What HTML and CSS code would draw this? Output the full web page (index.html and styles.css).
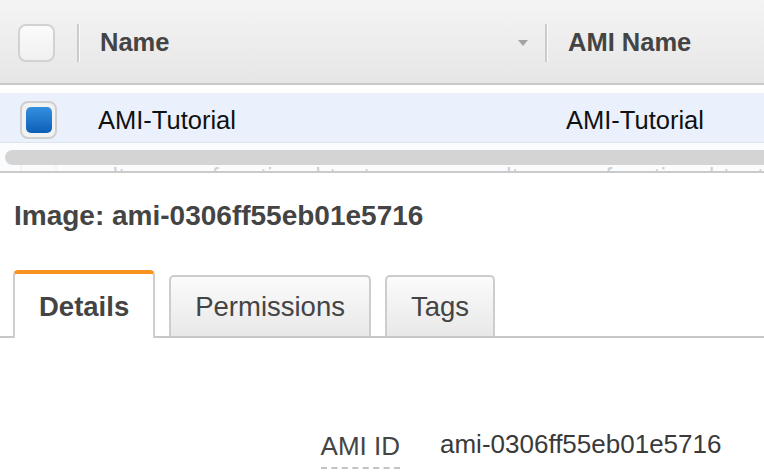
FILE: index.html
```html
<!DOCTYPE html>
<html lang="en">
<head>
<meta charset="utf-8">
<title>AMI Details</title>
<link rel="stylesheet" href="styles.css">
</head>
<body>
<div class="table">
  <div class="thead">
    <div class="cell c-check"><span class="checkbox"></span></div>
    <div class="cell c-name"><span>Name</span><span class="sort"></span></div>
    <div class="cell c-ami"><span>AMI Name</span></div>
  </div>
  <div class="row selected">
    <div class="rc rc-check"><span class="checkbox checked"><span class="tick"></span></span></div>
    <div class="rc rc-name">AMI-Tutorial</div>
    <div class="rc rc-ami">AMI-Tutorial</div>
  </div>
  <div class="row next">
    <div class="rc rc-check"><span class="checkbox faded"></span></div>
    <div class="rc rc-name">salt-server functional-test</div>
    <div class="rc rc-ami">salt-server functional-test</div>
  </div>
  <div class="track"><div class="thumb"></div></div>
</div>

<h2 class="title">Image: ami-0306ff55eb01e5716</h2>

<div class="tabs">
  <div class="tab active">Details</div>
  <div class="tab">Permissions</div>
  <div class="tab">Tags</div>
</div>

<div class="details">
  <div class="label"><span>AMI ID</span></div>
  <div class="value">ami-0306ff55eb01e5716</div>
</div>
</body>
</html>
```

FILE: styles.css
```css
html, body {
  margin: 0;
  padding: 0;
  background: #fff;
}
body {
  font-family: "Liberation Sans", Arial, Helvetica, sans-serif;
  width: 764px;
  height: 474px;
  overflow: hidden;
  color: #444;
}

/* ---------- table ---------- */
.table {
  position: relative;
  height: 171px;
  overflow: hidden;
  border-bottom: 2px solid #cacaca;
}
.thead {
  display: flex;
  align-items: center;
  height: 85px;
  padding-top: 2px;
  box-sizing: border-box;
  background: linear-gradient(#f4f4f4, #e6e6e6);
  border-bottom: 2px solid #c9c9c9;
  font-weight: bold;
  font-size: 25.5px;
  color: #444;
}
.cell {
  display: flex;
  align-items: center;
  box-sizing: border-box;
}
.c-check {
  width: 77px;
  padding-left: 18px;
}
.c-name {
  width: 468px;
  height: 38px;
  justify-content: space-between;
  padding: 0 17px 0 21px;
  border-left: 2px solid #cbcbcb;
  box-shadow: inset 1px 0 0 #fbfbfb;
}
.c-ami {
  height: 38px;
  padding-left: 21px;
  border-left: 2px solid #cbcbcb;
  box-shadow: inset 1px 0 0 #fbfbfb;
  flex: 1;
}
.sort {
  width: 0;
  height: 0;
  border-left: 5px solid transparent;
  border-right: 5px solid transparent;
  border-top: 6px solid #a3a3a3;
}
.checkbox {
  display: flex;
  align-items: center;
  justify-content: center;
  width: 37px;
  height: 38px;
  box-sizing: border-box;
  border: 2px solid #d2d2d2;
  border-radius: 8px;
  background: linear-gradient(#fbfbfb, #f0f0f0);
}
.checkbox.checked {
  border-color: #cfcfcf;
  background: #f2f2f2;
}
.tick {
  width: 26px;
  height: 26px;
  border-radius: 5px;
  background: linear-gradient(#3590e0, #0b5fb6);
}
.checkbox.faded {
  border-color: #e2e2e2;
}

.row {
  display: flex;
  align-items: center;
  font-size: 25.5px;
  color: #111;
  box-sizing: border-box;
}
.row.selected {
  margin-top: 8px;
  height: 50px;
  padding-top: 6px;
  background: #eaf1fc;
  border-bottom: 1px solid #dde4ee;
}
.row.next {
  align-items: flex-start;
  padding-top: 15px;
  color: #555;
}
.rc-check {
  width: 98px;
  padding-left: 20px;
  box-sizing: border-box;
}
.row.selected .rc-check {
  margin-top: -2px;
}
.rc-name {
  width: 468px;
  white-space: nowrap;
}
.rc-ami {
  flex: 1;
  white-space: nowrap;
}
.row.next .rc-name,
.row.next .rc-ami {
  margin-top: 5px;
}

.track {
  position: absolute;
  left: 0;
  right: 0;
  top: 143px;
  bottom: 0;
  background: rgba(250, 251, 253, 0.75);
}
.thumb {
  margin: 7px -20px 0 5px;
  height: 15px;
  border-radius: 8px;
  background: #d4d4d4;
}

/* ---------- heading ---------- */
.title {
  margin: 27px 0 0 14px;
  font-size: 28px;
  line-height: 32px;
  font-weight: bold;
  color: #444;
}

/* ---------- tabs ---------- */
.tabs {
  display: flex;
  align-items: flex-end;
  gap: 14px;
  margin-top: 38px;
  padding-left: 13px;
  border-bottom: 2px solid #c8c8c8;
}
.tab {
  font-size: 27.5px;
  line-height: 32px;
  color: #444;
  padding: 14px 24px 13px;
  border: 2px solid #cdcdcd;
  border-bottom: none;
  border-radius: 5px 5px 0 0;
  background: linear-gradient(#fbfbfb, #e8e8e8);
}
.tab.active {
  font-weight: bold;
  background: #fff;
  border-top: 4px solid #f7931e;
  padding: 17px 24px 15px;
  margin-bottom: -2px;
}

/* ---------- details ---------- */
.details {
  display: grid;
  grid-template-columns: 400px 1fr;
  column-gap: 40px;
  margin-top: 93px;
  font-size: 26px;
  line-height: 30px;
}
.label {
  justify-self: end;
}
.label span {
  display: inline-block;
  padding-bottom: 6px;
  border-bottom: 2px dashed #c4c4c4;
  color: #444;
}
.value {
  margin-top: -2px;
  color: #3a3a3a;
}
```
